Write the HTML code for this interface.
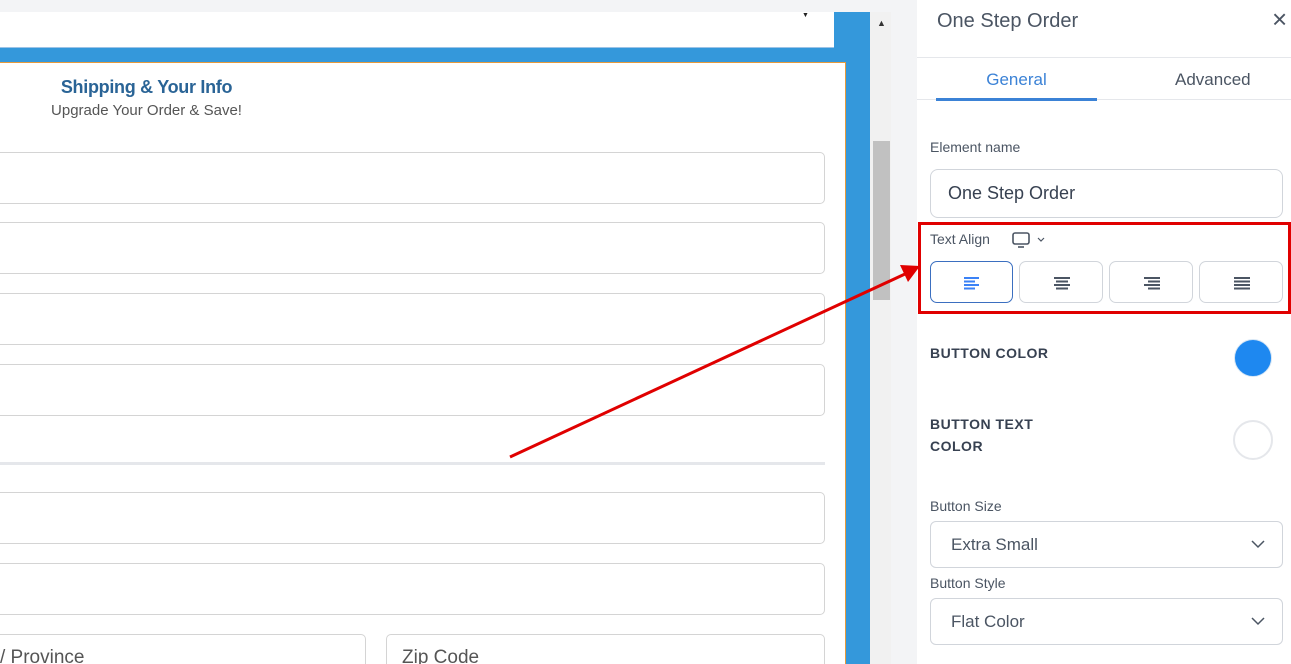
<!DOCTYPE html><html style="overflow:hidden;width:1291px;height:664px"><head><style>
*{box-sizing:border-box;margin:0;padding:0}
body{width:1291px;height:664px;overflow:hidden;background:#f3f4f6;position:relative;font-family:"Liberation Sans",sans-serif}
.a{position:absolute}
.inp{position:absolute;border:1px solid #d4d4d4;border-radius:5px;background:#fff}
.lbl{position:absolute;left:930px;font-size:14px;color:#4b5563}
.sel{position:absolute;left:930px;width:353px;height:47px;border:1px solid #d1d5db;border-radius:6px;font-size:17px;color:#4b5563;padding:13px 20px}
.btn{position:absolute;top:261px;width:84px;height:42px;border:1px solid #d1d5db;border-radius:7px;background:#fff}
</style></head><body>
<div class="a" style="left:0;top:0;width:1291px;height:664px;overflow:hidden">
<div class="a" style="left:0;top:12px;width:870px;height:652px;background:#3498db"></div>
<div class="a" style="left:0;top:12px;width:834px;height:36px;background:#fff;border-bottom:1px solid #9cc3e6"></div>
<div class="a" style="left:802px;top:12px;font-size:7px;color:#222">▼</div>
<div class="a" style="left:0;top:62px;width:846px;height:602px;background:#fff;border-top:1px solid #e69a3c;border-right:1px solid #e69a3c"></div>
<div class="a" style="left:0;top:77px;width:293px;text-align:center;font-size:18px;font-weight:bold;color:#2a6496;letter-spacing:-0.3px">Shipping &amp; Your Info</div>
<div class="a" style="left:0;top:102px;width:293px;text-align:center;font-size:15px;color:#555">Upgrade Your Order &amp; Save!</div>
<div class="inp" style="left:-6px;top:152px;width:831px;height:52px"></div>
<div class="inp" style="left:-6px;top:222px;width:831px;height:52px"></div>
<div class="inp" style="left:-6px;top:293px;width:831px;height:52px"></div>
<div class="inp" style="left:-6px;top:364px;width:831px;height:52px"></div>
<div class="a" style="left:0;top:462px;width:825px;height:3px;background:#e5e7eb"></div>
<div class="inp" style="left:-6px;top:492px;width:831px;height:52px"></div>
<div class="inp" style="left:-6px;top:563px;width:831px;height:52px"></div>
<div class="inp" style="left:-6px;top:634px;width:372px;height:52px"></div>
<div class="inp" style="left:386px;top:634px;width:439px;height:52px"></div>
<div class="a" style="left:0;top:647px;font-size:19px;color:#555">/ Province</div>
<div class="a" style="left:402px;top:647px;font-size:19px;color:#555">Zip Code</div>
<div class="a" style="left:870px;top:12px;width:21px;height:652px;background:#f1f1f1"></div>
<div class="a" style="left:877px;top:18px;font-size:9px;color:#333">▲</div>
<div class="a" style="left:873px;top:141px;width:17px;height:159px;background:#c1c1c1"></div>
<div class="a" style="left:917px;top:0;width:374px;height:664px;background:#fff"></div>
<div class="a" style="left:937px;top:10px;font-size:20px;color:#4b5563">One Step Order</div>
<div class="a" style="left:1272px;top:4px;font-size:26px;color:#4b5563">×</div>
<div class="a" style="left:917px;top:57px;width:374px;height:1px;background:#e5e7eb"></div>
<div class="a" style="left:936px;top:70px;width:161px;text-align:center;font-size:17px;color:#3b82d6">General</div>
<div class="a" style="left:1175px;top:70px;font-size:17px;color:#4b5563">Advanced</div>
<div class="a" style="left:917px;top:99px;width:374px;height:1px;background:#e5e7eb"></div>
<div class="a" style="left:936px;top:98px;width:161px;height:3px;background:#3b82d6"></div>
<div class="lbl" style="top:139px;font-size:14px">Element name</div>
<div class="a" style="left:930px;top:169px;width:353px;height:49px;border:1px solid #d1d5db;border-radius:8px;font-size:18px;color:#374151;padding:13px 17px">One Step Order</div>
<div class="a" style="left:918px;top:222px;width:373px;height:92px;border:3px solid #e00000"></div>
<div class="lbl" style="top:231px">Text Align</div>
<svg class="a" style="left:1011px;top:231px" width="38" height="18"><rect x="2" y="2" width="16" height="11" rx="2" fill="none" stroke="#4b5563" stroke-width="1.6"/><path d="M7 16h6" stroke="#4b5563" stroke-width="1.6"/><path d="M27 7l3 3 3-3" fill="none" stroke="#4b5563" stroke-width="1.2"/></svg>
<div class="btn" style="left:930px;border-color:#3b6fc0;width:83px"><svg width="83" height="42"><path d="M33 16h15M33 19.5h11M33 23h15M33 26.5h11" stroke="#3b82f6" stroke-width="2"/></svg></div>
<div class="btn" style="left:1019px"><svg width="84" height="42"><path d="M34 16h16M36 19.5h12M34 23h16M36 26.5h12" stroke="#4b5563" stroke-width="2"/></svg></div>
<div class="btn" style="left:1109px"><svg width="84" height="42"><path d="M34 16h16M38 19.5h12M34 23h16M38 26.5h12" stroke="#4b5563" stroke-width="2"/></svg></div>
<div class="btn" style="left:1199px"><svg width="84" height="42"><path d="M34 16h16M34 19.5h16M34 23h16M34 26.5h16" stroke="#4b5563" stroke-width="2"/></svg></div>
<div class="a" style="left:930px;top:345px;font-size:14px;font-weight:bold;color:#374151;letter-spacing:0.5px">BUTTON COLOR</div>
<div class="a" style="left:1234px;top:339px;width:38px;height:38px;border-radius:50%;background:#1e88f0;border:1px solid #d6e6f5"></div>
<div class="a" style="left:930px;top:413px;font-size:14px;font-weight:bold;color:#374151;letter-spacing:0.5px;line-height:22px">BUTTON TEXT<br>COLOR</div>
<div class="a" style="left:1233px;top:420px;width:40px;height:40px;border-radius:50%;border:2px solid #e5e7eb"></div>
<div class="lbl" style="top:498px">Button Size</div>
<div class="sel" style="top:521px">Extra Small</div>
<div class="lbl" style="top:575px">Button Style</div>
<div class="sel" style="top:598px">Flat Color</div>
<svg class="a" style="left:1250px;top:535px" width="16" height="100"><path d="M2 6l6 6 6-6M2 83l6 6 6-6" fill="none" stroke="#4b5563" stroke-width="1.5"/></svg>
<svg class="a" style="left:0;top:0" width="1291" height="664"><line x1="510" y1="457" x2="905" y2="274" stroke="#e00000" stroke-width="3"/><polygon points="920,266 900,265 908,282" fill="#e00000"/></svg>
</div>
</body></html>
